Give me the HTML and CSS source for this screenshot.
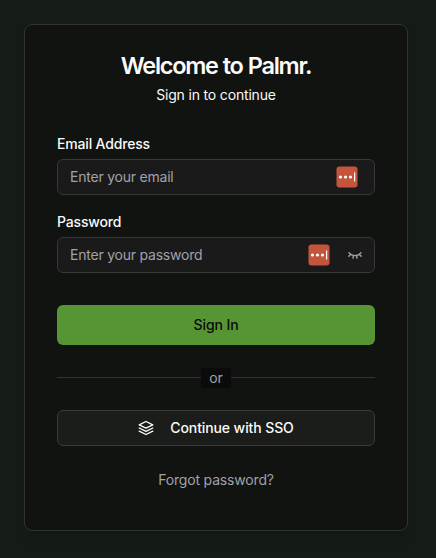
FILE: index.html
```html
<!DOCTYPE html>
<html lang="en">
<head>
<meta charset="utf-8">
<title>Palmr.</title>
<link rel="stylesheet" href="styles.css">
</head>
<body>
<main class="card">
  <header class="heading">
    <h1>Welcome to Palmr.</h1>
    <p>Sign in to continue</p>
  </header>
  <form class="form">
    <div class="field">
      <label class="label">Email Address</label>
      <div class="input">
        <span class="placeholder">Enter your email</span>
        <svg class="manager" viewBox="0 0 22 22"><rect x=".5" y=".5" width="21" height="21" rx="3" fill="#c5543c"/><g fill="#fff"><circle cx="4.5" cy="11" r="1.6"/><circle cx="9.5" cy="11" r="1.6"/><circle cx="14.5" cy="11" r="1.6"/><rect x="18" y="6.5" width="1.2" height="9"/></g></svg>
      </div>
    </div>
    <div class="field">
      <label class="label">Password</label>
      <div class="input">
        <span class="placeholder">Enter your password</span>
        <svg class="manager" viewBox="0 0 22 22"><rect x=".5" y=".5" width="21" height="21" rx="3" fill="#c5543c"/><g fill="#fff"><circle cx="4.5" cy="11" r="1.6"/><circle cx="9.5" cy="11" r="1.6"/><circle cx="14.5" cy="11" r="1.6"/><rect x="18" y="6.5" width="1.2" height="9"/></g></svg>
        <svg class="eye" viewBox="0 0 16 16"><path d="M1.9 5.7C4.8 9.6 11.2 9.6 14.1 5.7M3.6 7.5 1.8 9.3M12.4 7.5l1.8 1.8M6.4 8.7 6 11.2M9.6 8.7l.4 2.5"/></svg>
      </div>
    </div>
    <button class="submit" type="button">Sign In</button>
  </form>
  <div class="divider"><span>or</span></div>
  <button class="sso" type="button">
    <svg class="layers" viewBox="0 0 16 16"><path d="M8 1.5 1.2 4.8 8 8.1l6.8-3.3ZM1.2 8 8 11.3 14.8 8M1.2 11.2 8 14.5l6.8-3.3"/></svg>
    Continue with SSO
  </button>
  <a class="forgot">Forgot password?</a>
</main>
</body>
</html>
```

FILE: styles.css
```css
* { box-sizing: border-box; }
body {
  margin: 0;
  height: 558px;
  padding: 24px 28px 27px 24px;
  background: #151c15;
  color: #fafafa;
  font: 14px/20px Inter, sans-serif;
  letter-spacing: -.17px;
  overflow: hidden;
}
.card {
  display: flex;
  flex-direction: column;
  width: 384px;
  height: 507px;
  padding: 25px 32px 32px;
  border: 1px solid #30332f;
  border-radius: 8px;
  background: #10130f;
  box-shadow: 0 8px 12px -4px rgba(0, 0, 0, .18);
}
.heading { text-align: center; }
h1 {
  margin: 0 0 3px;
  font-size: 23.5px;
  line-height: 32px;
  font-weight: 600;
  letter-spacing: -1.3px;
  word-spacing: .6px;
}
p { margin: 0; }
.form { display: flex; flex-direction: column; margin-top: 32px; }
.field { margin-bottom: 20px; }
.label { display: block; line-height: 14px; margin-bottom: 8px; font-weight: 500; letter-spacing: -.17px; }
.input {
  display: flex;
  align-items: center;
  height: 36px;
  padding: 0 12px;
  border: 1px solid #373937;
  border-radius: 6px;
  background: #1a1a1a;
}
.placeholder { flex: 1; color: #a1a1aa; letter-spacing: -.22px; }
.manager { width: 22px; height: 22px; margin-right: 4px; }
.eye, .layers { width: 16px; height: 16px; fill: none; stroke: currentColor; stroke-width: 1.35; stroke-linecap: round; stroke-linejoin: round; }
.eye { margin: 0 -1px 0 13px; color: #a1a1aa; }
button { font: 500 14px/20px Inter, sans-serif; letter-spacing: -.1px; }
.submit { height: 40px; border: 0; border-radius: 6px; margin-top: 12px; background: #579434; color: #0a0a0a; }
.divider { display: flex; align-items: center; margin-top: 23px; color: #a1a1aa; letter-spacing: 0; }
.divider::before, .divider::after { content: ""; flex: 1; height: 1px; margin-bottom: 2px; background: #30332f; }
.divider span { padding: 0 8px; background: #0b0b0b; }
.sso {
  display: flex;
  align-items: center;
  justify-content: center;
  gap: 16px;
  height: 36px;
  flex: none;
  margin-top: 22px;
  border: 1px solid #373a37;
  border-radius: 6px;
  background: #1a1d1a;
  color: #fafafa;
}
.forgot { margin-top: 24px; text-align: center; color: #a1a1aa; }
```
